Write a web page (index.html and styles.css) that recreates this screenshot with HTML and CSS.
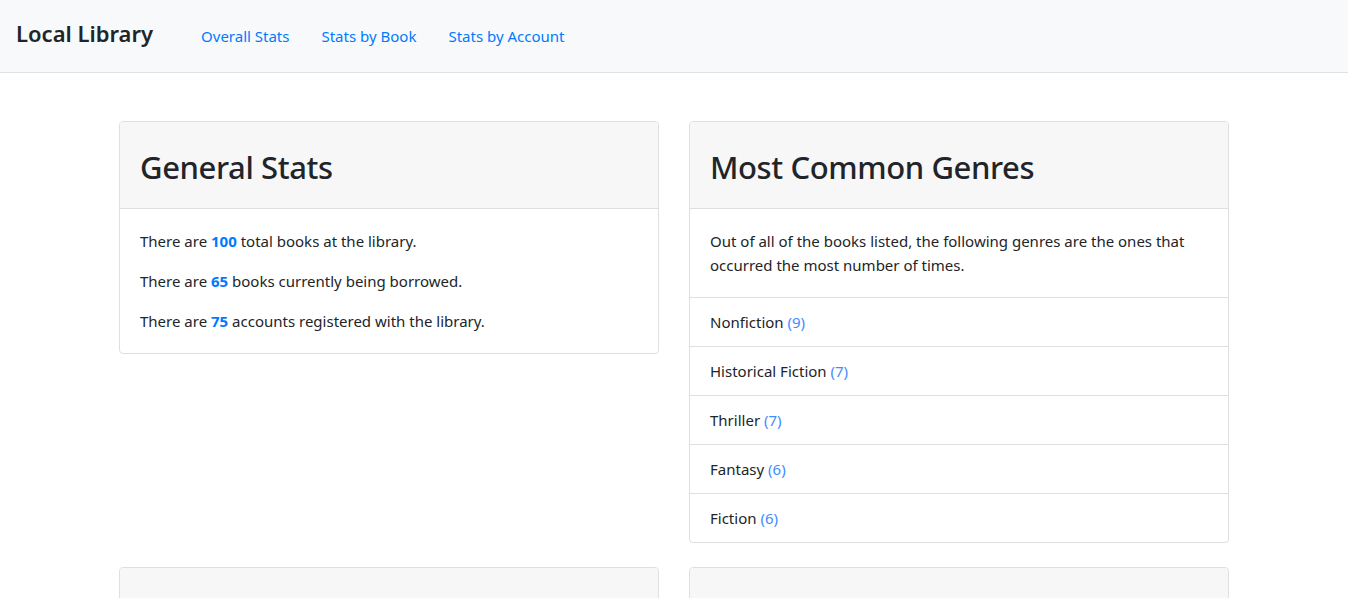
FILE: index.html
```html
<!DOCTYPE html>
<html lang="en">
<head>
<meta charset="utf-8">
<title>Local Library</title>
<link rel="stylesheet" href="styles.css">
</head>
<body>
<nav class="navbar">
  <a class="brand" href="#">Local Library</a>
  <ul class="nav">
    <li><a class="nav-link" href="#">Overall Stats</a></li>
    <li><a class="nav-link" href="#">Stats by Book</a></li>
    <li><a class="nav-link" href="#">Stats by Account</a></li>
  </ul>
</nav>
<main class="container">
  <div class="grid">
    <section class="card">
      <header class="card-header"><h1>General Stats</h1></header>
      <div class="card-body">
        <p>There are <strong class="num">100</strong> total books at the library.</p>
        <p>There are <strong class="num">65</strong> books currently being borrowed.</p>
        <p>There are <strong class="num">75</strong> accounts registered with the library.</p>
      </div>
    </section>
    <section class="card">
      <header class="card-header"><h1>Most Common Genres</h1></header>
      <div class="card-body">
        <p>Out of all of the books listed, the following genres are the ones that occurred the most number of times.</p>
      </div>
      <ul class="list">
        <li>Nonfiction <span class="count">(9)</span></li>
        <li>Historical Fiction <span class="count">(7)</span></li>
        <li>Thriller <span class="count">(7)</span></li>
        <li>Fantasy <span class="count">(6)</span></li>
        <li>Fiction <span class="count">(6)</span></li>
      </ul>
    </section>
    <section class="card">
      <header class="card-header card-header-empty"></header>
    </section>
    <section class="card">
      <header class="card-header card-header-empty"></header>
    </section>
  </div>
</main>
</body>
</html>
```
FILE: styles.css
```css
* { box-sizing: border-box; }
html, body { margin: 0; }
body {
  font-family: "Noto Sans", sans-serif;
  font-size: 15px;
  line-height: 24px;
  color: #212529;
  background: #fff;
}
a { text-decoration: none; }
.navbar {
  display: flex;
  align-items: center;
  height: 73px;
  padding: 0 16px;
  background: #f8f9fa;
  border-bottom: 1px solid #dee2e6;
}
.brand {
  font-size: 22px;
  font-weight: 600;
  color: #212529;
  margin-right: 32px;
  padding-bottom: 6px;
}
.nav {
  display: flex;
  list-style: none;
  margin: 0;
  padding: 0;
}
.nav-link {
  display: block;
  padding: 0 16px;
  color: #007bff;
}
.container {
  width: 1140px;
  margin: 0 auto;
  padding: 48px 15px 0;
}
.grid {
  display: grid;
  grid-template-columns: 1fr 1fr;
  column-gap: 30px;
  row-gap: 24px;
  align-items: start;
}
.card {
  border: 1px solid #dfdfdf;
  border-radius: 4px;
  background: #fff;
  overflow: hidden;
}
.card-header {
  background: #f7f7f7;
  border-bottom: 1px solid #dfdfdf;
  padding: 21px 20px 17px;
}
.card-header-empty { height: 87px; }
.card-header h1 {
  margin: 0;
  font-size: 31px;
  line-height: 48px;
  font-weight: 500;
  letter-spacing: -0.4px;
}
.card-body { padding: 20px; }
.card-body p { margin: 0 0 16px; }
.card-body p:last-child { margin-bottom: 0; }
.num { color: #007bff; font-weight: 700; }
.list { list-style: none; margin: 0; padding: 0; }
.list li {
  border-top: 1px solid #dfdfdf;
  padding: 12px 20px;
}
.count { color: #3f8cff; }
```
